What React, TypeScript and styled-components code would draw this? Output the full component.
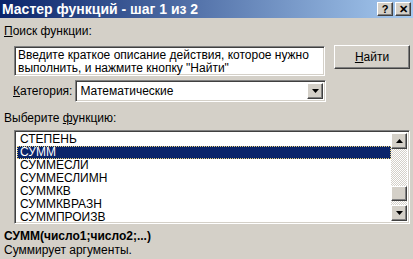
import styled, { createGlobalStyle } from 'styled-components';

const GlobalStyle = createGlobalStyle`
  html, body {
    margin: 0;
    padding: 0;
    background: #d4d0c8;
  }
  * { box-sizing: border-box; }
`;

const Window = styled.div`
  width: 413px;
  height: 259px;
  background: #d4d0c8;
  font-family: "Liberation Sans", Arial, sans-serif;
  font-size: 12px;
  color: #000;
  display: flex;
  flex-direction: column;
  overflow: hidden;
`;

const TitleBar = styled.div`
  height: 18px;
  display: flex;
  align-items: center;
  justify-content: space-between;
  padding: 0 2px 0 2px;
  background: linear-gradient(to right, #0a246a, #a6caf0);
  color: #fff;
  font-weight: bold;
  font-size: 14px;
`;

const TitleButtons = styled.div`
  display: flex;
  gap: 2px;
`;

const raised = `
  border: 1px solid;
  border-color: #fff #404040 #404040 #fff;
  box-shadow: inset -1px -1px 0 #808080, inset 1px 1px 0 #d4d0c8;
  background: #d4d0c8;
`;

const sunken = `
  border: 1px solid;
  border-color: #808080 #fff #fff #808080;
  box-shadow: inset 1px 1px 0 #404040, inset -1px -1px 0 #d4d0c8;
`;

const TitleButton = styled.div`
  ${raised}
  width: 16px;
  height: 14px;
  display: flex;
  align-items: center;
  justify-content: center;
  color: #000;
  font-size: 11px;
  font-weight: bold;
  line-height: 1;
`;

const Body = styled.div`
  display: flex;
  flex-direction: column;
  padding: 0 3px 0 4px;
`;

const Label = styled.div<{ $top: number }>`
  margin-top: ${p => p.$top}px;
  height: 13px;
  line-height: 13px;
  white-space: nowrap;
`;

const Key = styled.span`
  text-decoration: underline;
`;

const SearchRow = styled.div`
  display: flex;
  align-items: flex-start;
  margin-top: 7px;
`;

const SearchBox = styled.div`
  ${sunken}
  margin-left: 10px;
  margin-top: 1px;
  width: 311px;
  height: 30px;
  background: #fff;
  padding: 2px 3px;
  line-height: 13px;
  white-space: nowrap;
`;

const PushButton = styled.div`
  ${raised}
  margin-left: 9px;
  width: 76px;
  height: 24px;
  display: flex;
  align-items: center;
  justify-content: center;
`;

const CategoryRow = styled.div`
  display: flex;
  align-items: center;
  margin-top: 4px;
  margin-left: 9px;
  gap: 3px;
`;

const Select = styled.div`
  ${sunken}
  width: 251px;
  height: 22px;
  background: #fff;
  display: flex;
  align-items: center;
  justify-content: space-between;
  padding: 2px 2px 2px 4px;
`;

const ArrowButton = styled.div<{ $h?: number }>`
  ${raised}
  width: 16px;
  height: ${p => p.$h ?? 16}px;
  display: flex;
  align-items: center;
  justify-content: center;
`;

const ListBox = styled.div`
  ${sunken}
  margin-left: 10px;
  margin-top: 5px;
  width: 396px;
  height: 94px;
  background: #fff;
  display: flex;
  padding: 2px;
`;

const Rows = styled.div`
  flex: 1;
  display: flex;
  flex-direction: column;
`;

const Row = styled.div<{ $selected?: boolean }>`
  height: 13px;
  line-height: 13px;
  padding-left: 3px;
  background: ${p => (p.$selected ? '#0a246a' : 'transparent')};
  color: ${p => (p.$selected ? '#fff' : '#000')};
  outline: ${p => (p.$selected ? '1px dotted #e8d078' : 'none')};
  outline-offset: -1px;
`;

const ScrollBar = styled.div`
  width: 16px;
  display: flex;
  flex-direction: column;
  background-color: #fff;
  background-image: conic-gradient(#d4d0c8 25%, #fff 0 50%, #d4d0c8 0 75%, #fff 0);
  background-size: 2px 2px;
`;

const Track = styled.div<{ $h: number }>`
  height: ${p => p.$h}px;
`;

const FuncSignature = styled.div`
  margin-top: 5px;
  height: 14px;
  line-height: 14px;
  font-weight: bold;
`;

const FuncDesc = styled.div`
  margin-top: 1px;
  line-height: 13px;
`;

const Triangle = ({ up }: { up?: boolean }) => (
  <svg width="7" height="4" viewBox="0 0 7 4">
    <path d={up ? 'M3.5 0 L7 4 L0 4 Z' : 'M0 0 L7 0 L3.5 4 Z'} fill="#000" />
  </svg>
);

const functions = ['СТЕПЕНЬ', 'СУММ', 'СУММЕСЛИ', 'СУММЕСЛИМН', 'СУММКВ', 'СУММКВРАЗН', 'СУММПРОИЗВ'];

export default function App() {
  return (
    <>
      <GlobalStyle />
      <Window>
        <TitleBar>
          <span>Мастер функций - шаг 1 из 2</span>
          <TitleButtons>
            <TitleButton>?</TitleButton>
            <TitleButton>✕</TitleButton>
          </TitleButtons>
        </TitleBar>
        <Body>
          <Label $top={7}>
            <Key>П</Key>оиск функции:
          </Label>
          <SearchRow>
            <SearchBox>
              Введите краткое описание действия, которое нужно
              <br />
              выполнить, и нажмите кнопку "Найти"
            </SearchBox>
            <PushButton>
              <span>
                <Key>Н</Key>айти
              </span>
            </PushButton>
          </SearchRow>
          <CategoryRow>
            <span>
              <Key>К</Key>атегория:
            </span>
            <Select>
              <span>Математические</span>
              <ArrowButton>
                <Triangle />
              </ArrowButton>
            </Select>
          </CategoryRow>
          <Label $top={10}>
            Выберите <Key>ф</Key>ункцию:
          </Label>
          <ListBox>
            <Rows>
              {functions.map(f => (
                <Row key={f} $selected={f === 'СУММ'}>
                  {f}
                </Row>
              ))}
            </Rows>
            <ScrollBar>
              <ArrowButton>
                <Triangle up />
              </ArrowButton>
              <Track $h={38} />
              <ArrowButton />
              <Track $h={4} />
              <ArrowButton>
                <Triangle />
              </ArrowButton>
            </ScrollBar>
          </ListBox>
          <FuncSignature>СУММ(число1;число2;...)</FuncSignature>
          <FuncDesc>Суммирует аргументы.</FuncDesc>
        </Body>
      </Window>
    </>
  );
}
